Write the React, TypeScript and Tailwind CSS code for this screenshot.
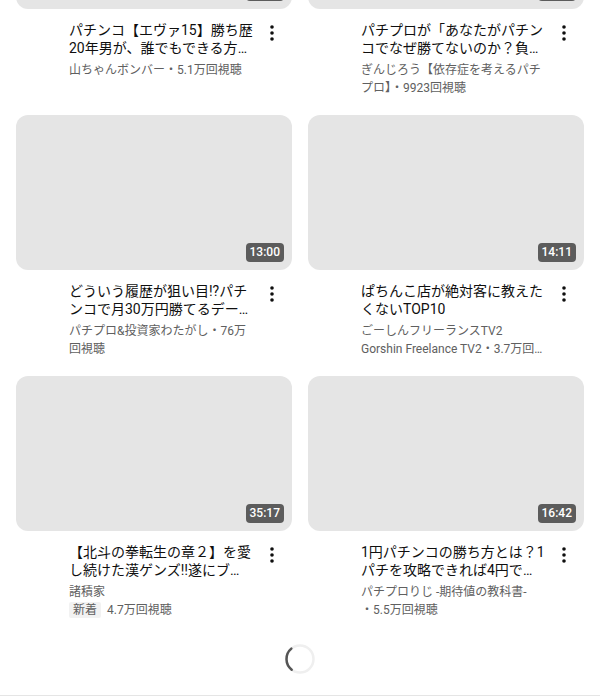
import React from "react";

type Video = {
  duration: string;
  title: string;
  meta: React.ReactNode;
};

const videos: Video[] = [
  {
    duration: "12:08",
    title: "パチンコ【エヴァ15】勝ち歴20年男が、誰でもできる方法を教えます",
    meta: "山ちゃんボンバー・5.1万回視聴",
  },
  {
    duration: "10:24",
    title: "パチプロが「あなたがパチンコでなぜ勝てないのか？負けている理由」",
    meta: "ぎんじろう【依存症を考えるパチプロ】・9923回視聴",
  },
  {
    duration: "13:00",
    title: "どういう履歴が狙い目!?パチンコで月30万円勝てるデータの見方",
    meta: "パチプロ&投資家わたがし・76万回視聴",
  },
  {
    duration: "14:11",
    title: "ぱちんこ店が絶対客に教えたくないTOP10",
    meta: (
      <>
        ごーしんフリーランスTV2
        <br />
        Gorshin Freelance TV2・3.7万回視聴
      </>
    ),
  },
  {
    duration: "35:17",
    title: "【北斗の拳転生の章２】を愛し続けた漢ゲンズ‼遂にブチギレ",
    meta: (
      <>
        諸積家
        <br />
        <span className="mr-[6px] inline-block rounded-[2px] bg-[#f2f2f2] px-1 leading-4 text-[#606060]">
          新着
        </span>
        4.7万回視聴
      </>
    ),
  },
  {
    duration: "16:42",
    title: "1円パチンコの勝ち方とは？1パチを攻略できれば4円でも勝てる",
    meta: (
      <>
        パチプロりじ -期待値の教科書-
        <br />
        ・5.5万回視聴
      </>
    ),
  },
];

function MoreVert() {
  return (
    <svg width="24" height="24" viewBox="0 0 24 24" fill="#0f0f0f">
      <circle cx="12" cy="6" r="1.8" />
      <circle cx="12" cy="12" r="1.8" />
      <circle cx="12" cy="18" r="1.8" />
    </svg>
  );
}

function Card({ v }: { v: Video }) {
  return (
    <div>
      <div className="relative h-[155px] rounded-xl bg-[#e5e5e5]">
        <span className="absolute bottom-2 right-2 rounded-[4px] bg-[rgba(0,0,0,0.6)] px-1 text-xs font-medium leading-[19px] text-white">
          {v.duration}
        </span>
      </div>
      <div className="mt-3 flex pl-[53px] pr-2">
        <div className="w-[184px]">
          <h3 className="line-clamp-2 text-sm font-normal leading-[18px] text-[#0f0f0f]">
            {v.title}
          </h3>
          <div className="mt-1 line-clamp-2 text-xs leading-[18px] text-[#606060]">
            {v.meta}
          </div>
        </div>
        <div className="ml-auto h-6 w-6">
          <MoreVert />
        </div>
      </div>
    </div>
  );
}

export default function App() {
  return (
    <div className="h-[696px] w-full overflow-hidden border-b border-[#e5e5e5] bg-white font-['Roboto','Noto_Sans_CJK_JP',sans-serif]">
      <div className="mt-[-146px] grid auto-rows-[243px] grid-cols-2 gap-x-4 gap-y-[18px] px-4">
        {videos.map((v, i) => (
          <Card key={i} v={v} />
        ))}
      </div>
      <div className="mt-6 flex justify-center">
        <svg width="32" height="32" viewBox="0 0 32 32" fill="none">
          <circle cx="16" cy="16" r="13.5" stroke="#efefef" strokeWidth="2.5" />
          <path
            d="M 7.32 5.66 A 13.5 13.5 0 0 0 7.69 26.64"
            stroke="#555555"
            strokeWidth="2.5"
            strokeLinecap="round"
          />
        </svg>
      </div>
    </div>
  );
}
